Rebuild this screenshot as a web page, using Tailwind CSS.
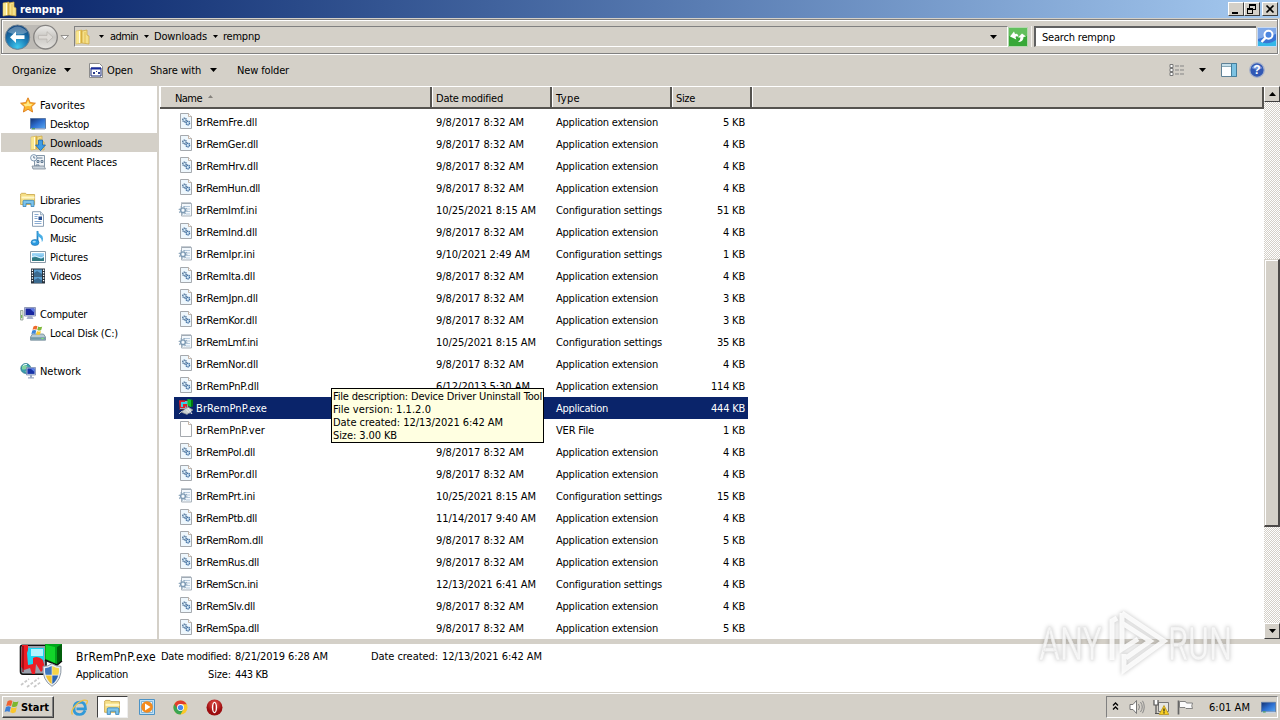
<!DOCTYPE html>
<html lang="en">
<head>
<meta charset="utf-8">
<title>rempnp</title>
<script src="https://cdn.jsdelivr.net/npm/@tailwindcss/browser@4"></script>
</head>
<body class="w-[1280px] h-[720px] overflow-hidden bg-[#d4d0c8] text-black text-[11px] leading-[13px] font-['DejaVu_Sans_Condensed','DejaVu_Sans','Noto_Sans',sans-serif] whitespace-nowrap">
<svg class="absolute w-0 h-0">
  <defs>
    <linearGradient id="gold" x2="1"><stop stop-color="#fdf3a8"/><stop offset=".5" stop-color="#f7dc72"/><stop offset="1" stop-color="#d9ac35"/></linearGradient>
    <linearGradient id="scr" x2="1" y2="1"><stop stop-color="#14306e"/><stop offset=".5" stop-color="#2d6ed0"/><stop offset="1" stop-color="#5aa8f0"/></linearGradient>
    <linearGradient id="sky" x2="0" y2="1"><stop stop-color="#a9dcfa"/><stop offset="1" stop-color="#3d9ad8"/></linearGradient>
    <radialGradient id="back" cx=".5" cy=".9" r=".9"><stop stop-color="#3fc8ee"/><stop offset=".45" stop-color="#1d7fb8"/><stop offset="1" stop-color="#0f3f78"/></radialGradient>
    <linearGradient id="fwd" x2="0" y2="1"><stop stop-color="#eeedea"/><stop offset=".5" stop-color="#c9c7c3"/><stop offset="1" stop-color="#e6e4e0"/></linearGradient>
    <radialGradient id="red" cy=".3"><stop stop-color="#ee5a50"/><stop offset="1" stop-color="#9c0d10"/></radialGradient>
  </defs>
  <symbol id="folder" viewBox="0 0 16 16"><path d="M1 2l6-1v13l-6 1z" fill="url(#gold)" stroke="#d8b64e" stroke-width=".6"/><path d="M7 2l5-1v5l2 1v8l-7-1z" fill="#f5e08a" stroke="#cda53a" stroke-width=".7"/><path d="M4.500 2v12" stroke="#fffbe0" stroke-width="1.400"/><path d="M10 3v11" stroke="#e2bd50" stroke-width="1"/></symbol>
  <symbol id="star" viewBox="0 0 16 16"><path d="M8 .8l2.200 4.800 5.200.6-3.900 3.500 1.100 5.300L8 12.300 3.400 15l1.100-5.300L.6 6.200l5.200-.6z" fill="#fcb72c" stroke="#dc7a18" stroke-width=".9"/><path d="M8 3.500l1.400 3.200 3.200.5-2.400 2L8 9 5.400 9.600 3.400 7.200l3.200-.5z" fill="#ffe98a"/></symbol>
  <symbol id="desktop" viewBox="0 0 16 16"><path d="M.5 2.500h15v10H.5z" fill="url(#scr)" stroke="#5b7aa8"/><path d="M1 12.500h14v1.500H1z" fill="#c6d3e6"/><path d="M2 12.800h3" stroke="#3a9a3a"/></symbol>
  <symbol id="downloads" viewBox="0 0 16 16"><use href="#folder"/><path d="M8.500 5h4v5h3l-5 5.700-5-5.700h3z" fill="#3f9de4" stroke="#1e66ad" stroke-width=".8"/></symbol>
  <symbol id="recent" viewBox="0 0 16 16"><path d="M4.500 1.500h10v11h-10z" fill="#eef2f6" stroke="#8597a8"/><path d="M6.500 4h6M7 6.500h2v2H7zm4 0h2v2h-2zM6 11h3v2H6z" stroke="#647b92" fill="#cfe0ee"/><path d="M2 12h12l1.500 3H3z" fill="#c9d3dc" stroke="#7d8b98" stroke-width=".8"/><circle cx="3.800" cy="3.800" r="3.200" fill="#f4f8fc" stroke="#7f98b0"/><path d="M3.800 2v2h1.500" stroke="#445f7c" fill="none" stroke-width=".8"/></symbol>
  <symbol id="libraries" viewBox="0 0 16 16"><path d="M.6 3.500V2l1-.7h4l1 1.200h8v10H.6z" fill="#f6df86" stroke="#c7a345" stroke-width=".8"/><path d="M1.500 4.500h13v2h-13z" fill="#fff7c8"/><path d="M3 14.500V9.500q0-1.200 1.200-1.200h8.600q1.200 0 1.200 1.200v5h-3v-3H6v3z" fill="#7cc4ec" stroke="#3a83b8" stroke-width=".8"/></symbol>
  <symbol id="documents" viewBox="0 0 16 16"><path d="M2.500.7h8l3 3v11.600h-11z" fill="#fff" stroke="#7d93aa" stroke-width=".9"/><path d="M4.500 3.500h4M4.500 5.500h3M4.500 7.500h3M4.500 10.500h7M4.500 12.500h7" stroke="#7aa0cc" stroke-width=".9"/><path d="M8.500 5.500h3.500v3.500H8.500z" fill="#274f91"/><path d="M10.500.8v3h3" fill="#dce8f2" stroke="#7d93aa" stroke-width=".7"/></symbol>
  <symbol id="music" viewBox="0 0 16 16"><path d="M7.500 1v11" stroke="#2387c8" stroke-width="1.800"/><ellipse cx="5" cy="12.500" rx="4" ry="3" fill="#2a9ae0" stroke="#1b6fae" stroke-width=".6"/><path d="M7.500.5q.5 3 3 4t2.500 4-1.200 3.500q.4-4-4.300-6z" fill="#48aee6"/><ellipse cx="4.200" cy="11.800" rx="1.700" ry="1" fill="#a5dcfa"/></symbol>
  <symbol id="pictures" viewBox="0 0 16 16"><path d="M.5 2.500h15v11H.5z" fill="#fff" stroke="#8a9aa8"/><path d="M2 4h12v8H2z" fill="url(#sky)"/><path d="M2 9q4-2 7 0t5-1v4H2z" fill="#317a82"/><path d="M2 7.500q3-1.500 6 .5t6-.5" stroke="#dff3fd" fill="none"/></symbol>
  <symbol id="videos" viewBox="0 0 16 16"><path d="M1 .5h14v15H1z" fill="#26313c"/><path d="M4 1.500h8v6H4zM4 8.500h8v6H4z" fill="#5b9fd2"/><path d="M4 5l3-2 5 3v1.500H4zM4 12l4-2 4 2.500v2H4z" fill="#3a6a90"/><path d="M2.400 1.500v13M13.600 1.500v13" stroke="#fff" stroke-width="1.300" stroke-dasharray="1.400 1.200"/></symbol>
  <symbol id="computer" viewBox="0 0 16 16"><path d="M.5 4.500h2.500v9.500H.5z" fill="#dbe5d6" stroke="#8b9a90" stroke-width=".8"/><path d="M1.700 9v3" stroke="#5fae3e"/><path d="M4.500 1.500h11v8.500h-11z" fill="#cdd4ea" stroke="#7a84a8" stroke-width=".8"/><path d="M5.600 2.500h8.800v6.500H5.600z" fill="#1826a0"/><path d="M10 2.500h4.400v4q-2-1-4.400-4z" fill="#5b78e0"/><path d="M8 10h4l1.500 3h-7z" fill="#a5aeca"/></symbol>
  <symbol id="disk" viewBox="0 0 16 16"><path d="M2.500 9h11l2 3v3.200H.5V12z" fill="#b7cad4" stroke="#6f8896" stroke-width=".8"/><path d="M1 12.200h14v2.500H1z" fill="#739aa8"/><path d="M11.500 13.500h2" stroke="#7cf36a"/><path d="M3.500 1.500q2-1.500 4-.3L6.500 4.800q-2-1-4 0z" fill="#ee6a2c"/><path d="M8.200 1.500q2 1 4 0l-1 3.600q-2 1-4 0z" fill="#80b93a"/><path d="M2.300 5.500q2-1 4 0l-1 3.500q-2-1-4 .2z" fill="#3c86d8"/><path d="M7 5.900q2 1 4 0L10 9.500q-2 .8-4-.2z" fill="#f8c92e"/></symbol>
  <symbol id="network" viewBox="0 0 16 16"><circle cx="5.800" cy="5.500" r="5" fill="#3c9cae" stroke="#257084" stroke-width=".7"/><path d="M2 3q3-2 5 0t-1 3-4 0zM5 8h4l-2 2z" fill="#83d3a0"/><path d="M3 2.500q2-1.500 4-1" stroke="#dffaff" fill="none"/><path d="M6.500 4.500h9v7.500h-9z" fill="#d2dcee" stroke="#6b7ca8" stroke-width=".7"/><path d="M7.400 5.400h7.200v5.500H7.400z" fill="#1733a8"/><path d="M10.500 5.400h4.100v3.500z" fill="#5b83e8"/><path d="M10 12h2v2.200h2v1.300H8v-1.300h2z" fill="#9aa9c4"/></symbol>
  <symbol id="dll" viewBox="0 0 16 16"><path d="M2.500.5h8l3 3v12h-11z" fill="#eef7fd" stroke="#a5a9ae"/><path d="M10.500.5v3h3" fill="#fff" stroke="#b9a592" stroke-width=".8"/><circle cx="6.500" cy="7" r="1.800" fill="#cfe6f6" stroke="#53759a" stroke-width="1.400" stroke-dasharray="1.200 .5"/><circle cx="9.800" cy="10" r="1.800" fill="#cfe6f6" stroke="#3f6da0" stroke-width="1.400" stroke-dasharray="1.200 .5"/></symbol>
  <symbol id="ini" viewBox="0 0 16 16"><path d="M3.500 2.500h10v12.500h-10z" fill="#f3f8fc" stroke="#a9b2bb"/><path d="M3.500 1.700h10" stroke="#8d98a5" stroke-width="1.400" stroke-dasharray="1 1"/><path d="M6 5.500h6M9 8h3M9 10.500h3M8 13h4" stroke="#b5c9dc"/><circle cx="5" cy="9.300" r="2.400" fill="#dceaf4" stroke="#7f9ab3" stroke-width="1.400"/><circle cx="5" cy="9.300" r="3.800" fill="none" stroke="#8ba4ba" stroke-width="1.200" stroke-dasharray="1.400 1.580"/><circle cx="5" cy="9.300" r="1" fill="#fff"/></symbol>
  <symbol id="ver" viewBox="0 0 16 16"><path d="M2.500.5h8l3 3v12h-11z" fill="#fefefe" stroke="#a5a9ae"/><path d="M10.500.5v3h3" fill="#fff" stroke="#b9a592" stroke-width=".8"/></symbol>
  <symbol id="exebig" viewBox="0 0 44 44"><path d="M1.500 7V3q0-1.800 2-1.800H27v29H4q-2.500 0-2.500-3z" fill="#9aa0ac" stroke="#111" stroke-width="1.600"/><path d="M6 4h19v17H6z" fill="#19d6f2"/><path d="M12 5h12v7H12z" fill="#b0f4ff"/><path d="M3 1h6v5l-1 3 1 12 5-1v-6q5-3 10 2l2 8-4 4-3-5-2-3-1 10h-3l-2-6-6 2-3-3z" fill="#ee1c24"/><path d="M4 2v26" stroke="#7c0710" stroke-width="1.200"/><path d="M26 0h17v17l-5 4-12-5z" fill="#00a51b"/><path d="M38 3v18l5-4V0z" fill="#015f0b"/><path d="M26 16l12 5 5-4" fill="none" stroke="#111" stroke-width="1.600"/><path d="M27 1v14l9 4V3z" fill="#12d62a"/><path d="M2 41l8-6M8 43l12-9M15 43l7-5" stroke="#c9c9c9" stroke-width="1.700" stroke-dasharray="3 1.500"/></symbol>
  <symbol id="exe" viewBox="0 0 16 16"><path d="M1.500 1.500h9v9h-9z" fill="#9aa5b5" stroke="#5a2840"/><path d="M3 3h6v5H3z" fill="#36d2e4"/><path d="M1 1.500h6v1.500H3v5h2V5h4v4L7 7v2H2z" fill="#e2202c"/><path d="M9.500 0L15 1v6l-3 1-2.500-2z" fill="#10c22c"/><path d="M13 1v7l2-1V1z" fill="#037312"/><path d="M3 13l7-5 5 3-6 4.500z" fill="#c9d0d0" stroke="#8b9196" stroke-width=".7"/><path d="M10 9l4 6M8 10.500l4 4" stroke="#eef2f2"/><path d="M1 15l3-3" stroke="#b9bcc0"/></symbol>
  <symbol id="shield" viewBox="0 0 20 24"><path d="M10 .8q4.500 3 9 2.500 1 14-9 20Q0 17.300 1 3.300 5.500 3.800 10 .8z" fill="#e9eef3" stroke="#8d98a4"/><path d="M9.700 3Q6.500 5 3 5.200q-.2 3.500.6 6.600h6.100z" fill="#3f78bf"/><path d="M10.300 3q3.200 2 6.700 2.200.2 3.500-.6 6.600h-6.100z" fill="#f6d447"/><path d="M9.700 12.400H3.800Q5.500 18 9.700 21z" fill="#f2c22e"/><path d="M10.300 12.400h5.900q-1.700 5.600-5.900 8.600z" fill="#2c64ae"/></symbol>
  <symbol id="win" viewBox="0 0 18 18"><path d="M4 2.500q3-2 5.500-.3L8 8Q5.500 6.500 2.500 8z" fill="#ef6130"/><path d="M10.300 2.800q3 1.500 6-.3L14.700 8q-3 2-6 .3z" fill="#7db72e"/><path d="M2.200 9q3-1.500 5.500 0l-1.500 5.500q-2.500-1.500-5.500 0z" fill="#3b7fd6"/><path d="M8.400 9.300q3 1.800 6 0L13 15q-3 1.800-6 0z" fill="#fac62c"/></symbol>
  <symbol id="down" viewBox="0 0 7 4"><path d="M0 0h7L3.500 4z" fill="currentColor"/></symbol>
</svg>

<!-- title bar -->
<header class="h-[18px] flex items-center pl-[2px] pr-[2px] bg-linear-to-r from-[#0a246a] to-[#a6caf0]">
  <svg class="w-4 h-4"><use href="#folder"/></svg>
  <span class="ml-[2px] font-bold text-white" data-w="43">rempnp</span>
  <div class="ml-auto flex h-[14px]">
    <div class="w-4 h-[14px] bg-[#d4d0c8] border border-t-white border-l-white border-r-[#404040] border-b-[#404040]"><svg viewBox="0 0 14 12" class="block w-[14px] h-3"><path d="M3 9h6v2H3z"/></svg></div>
    <div class="w-4 h-[14px] bg-[#d4d0c8] border border-t-white border-l-white border-r-[#404040] border-b-[#404040]"><svg viewBox="0 0 14 12" class="block w-[14px] h-3" shape-rendering="crispEdges"><path d="M4 1h7v2H4zM4 1h1v4H4zM10 1h1v6h-1zM8 6h3v1H8zM2 5h6v2H2zM2 5h1v6H2zM7 5h1v6H7zM2 10h6v1H2z"/></svg></div>
    <div class="ml-[2px] w-4 h-[14px] bg-[#d4d0c8] border border-t-white border-l-white border-r-[#404040] border-b-[#404040]"><svg viewBox="0 0 14 12" class="block w-[14px] h-3"><path d="M3.500 2.500l7 7M10.500 2.500l-7 7" stroke="#000" stroke-width="1.700"/></svg></div>
  </div>
</header>

<!-- address bar -->
<div class="h-[36px] pt-px">
  <div class="h-[35px] ml-px mr-[2px] border border-[#808080] flex items-center shadow-[inset_1px_1px_0_#fff,0_1px_0_#fff,1px_0_0_#fff]">
    <svg class="w-[72px] h-[33px] shrink-0" viewBox="2 20 72 33"><path d="M17 25h28q-8 12 0 24H17z" fill="#bdbab5"/><circle cx="17.500" cy="37.200" r="12.200" fill="url(#back)" stroke="#6e8292"/><path d="M7.500 32q10-11 20 0-8 5-20 0z" fill="#fff" opacity=".3"/><path d="M10 37.200l6-5.700v3.800h8.500v3.800H16v3.800z" fill="#fff"/><circle cx="45.500" cy="37.200" r="11.800" fill="url(#fwd)" stroke="#858381" stroke-width="1.300"/><path d="M53 37.200l-6-5.500v3.700h-8.500v3.600H47v3.700z" fill="#dddad6" stroke="#b4b1ac" stroke-width=".7"/><path d="M61 35.500h7.500L64.700 39.500z" fill="#fff" stroke="#7d7b78" stroke-width=".8"/></svg>
    <div class="flex-1 h-[21px] border-t border-l border-[#808080] border-b border-b-white border-r border-r-white flex items-center">
      <svg class="w-4 h-4"><use href="#folder"/></svg>
      <svg class="w-[5px] h-[3px] ml-2"><use href="#down"/></svg>
      <span class="ml-[6px]" data-w="28">admin</span>
      <svg class="w-[5px] h-[3px] ml-[6px]"><use href="#down"/></svg>
      <span class="ml-[5px]" data-w="53">Downloads</span>
      <svg class="w-[5px] h-[3px] ml-[6px]"><use href="#down"/></svg>
      <span class="ml-[5px]" data-w="37">rempnp</span>
      <svg class="w-[7px] h-1 ml-auto mr-[10px]"><use href="#down"/></svg>
    </div>
    <svg class="w-[20px] h-[20px] shrink-0" viewBox="0 0 20 20"><path d="M.5.5h19v19H.5z" fill="#38a838" stroke="#b5d9b0"/><path d="M1 1h18v8H1z" fill="#7fcf76" opacity=".6"/><path d="M2 9.500L6 4.500l1 2.500q3-1 3.500 3-2-1.500-3 0l.8 2.500z" fill="#fff"/><path d="M18 9.500l-4-3-4 4h2.500q0 3-2.500 4.500 5.500 0 5.500-5z" fill="#fff"/></svg>
    <div class="w-px h-[21px] ml-[3px] bg-[#f4f2ee] shrink-0"></div>
    <div class="ml-[2px] w-[222px] h-[21px] bg-white border-t-2 border-l-2 border-t-[#606060] border-l-[#606060] border-b border-b-[#d4d0c8] flex items-center shrink-0 pl-[6px]"><span data-w="73">Search rempnp</span></div>
    <svg class="ml-px w-[20px] h-[20px] shrink-0" viewBox="0 0 20 20"><path d="M.5.5h19v19H.5z" fill="#3a74d4" stroke="#c8daf2"/><path d="M1 1h18v6L1 12z" fill="#7fa8e8"/><path d="M1 19v-5q10 5 18-1v6z" fill="#35b7e8"/><circle cx="11.500" cy="7.800" r="4" fill="#4b86e0" stroke="#fff" stroke-width="2"/><path d="M8.500 10.800L4.500 15" stroke="#fff" stroke-width="2.500"/></svg>
  </div>
</div>

<!-- command bar -->
<div class="h-[32px] flex items-center pl-3 pr-[15px]">
  <span data-w="44">Organize</span><svg class="w-[7px] h-1 ml-2"><use href="#down"/></svg>
  <svg class="w-[14px] h-[15px] ml-[18px]" viewBox="0 0 14 15"><path d="M.5.500h10l3 3v11H.5z" fill="#fff" stroke="#8c8c8c"/><path d="M2 5h10v8H2z" fill="#fff" stroke="#182a78"/><path d="M2 4.500h10v2H2z" fill="#182a9c"/><path d="M4 9h2v2H4zM7 8h1v1H7zM9 9h2v2H9z" fill="#2a3c8c"/></svg>
  <span class="ml-[4px]" data-w="26">Open</span>
  <span class="ml-[17px]" data-w="51">Share with</span><svg class="w-[7px] h-1 ml-[9px]"><use href="#down"/></svg>
  <span class="ml-[20px]" data-w="52">New folder</span>
  <svg class="w-[16px] h-[12px] ml-auto" viewBox="0 0 16 12" fill="none"><path d="M1 .5h3v3H1zM1 4.500h3v3H1zM1 8.500h3v3H1z" fill="#fff" stroke="#777"/><path d="M6 2h4M11 2h4M6 6h4M11 6h4M6 10h4M11 10h4" stroke="#858585"/></svg>
  <svg class="w-[7px] h-1 ml-[14px]"><use href="#down"/></svg>
  <svg class="w-[16px] h-[14px] ml-[15px]" viewBox="0 0 16 14"><path d="M.5.5h15v13H.5z" fill="#fdfeff" stroke="#5e8196"/><path d="M1 1h9v3H1z" fill="#c5dfea"/><path d="M10.500.5h5v13h-5z" fill="#7cc2e2" stroke="#447e9c"/><path d="M1 3.500h9" stroke="#88a9b8"/></svg>
  <svg class="w-[16px] h-[16px] ml-[12px]" viewBox="0 0 16 16"><circle cx="8" cy="8" r="7.300" fill="#3158b4" stroke="#a8b2ca" stroke-width="1.300"/><path d="M2.500 6q5-7 11 0-5 3-11 0z" fill="#88a5e4" opacity=".8"/><text x="8" y="12.300" text-anchor="middle" font-size="12" font-weight="bold" fill="#fff" font-family="Liberation Sans">?</text></svg>
</div>

<!-- content -->
<main class="h-[553px] flex">
  <nav id="nav" class="w-[157px] pt-[9px] bg-white"></nav>
  <div class="w-[3px] bg-[#d4d0c8] border-r border-white"></div>
  <section class="w-[1104px] bg-white">
    <div class="h-[23px] border-t border-t-white border-b-2 border-b-[#55534f] bg-[#d4d0c8] flex items-stretch">
      <div class="w-[272px] pl-[14px] pt-[2px] flex items-center border-l border-l-white border-r-2 border-r-[#55534f]"><span data-w="27">Name</span><svg class="w-[5px] h-[3px] ml-[6px] mb-1 rotate-180 text-[#85827c]"><use href="#down"/></svg></div>
      <div class="w-[120px] pl-[3px] pt-[2px] flex items-center border-l border-l-white border-r-2 border-r-[#55534f]"><span data-w="67">Date modified</span></div>
      <div class="w-[120px] pl-[3px] pt-[2px] flex items-center border-l border-l-white border-r-2 border-r-[#55534f]"><span data-w="24">Type</span></div>
      <div class="w-[80px] pl-[3px] pt-[2px] flex items-center border-l border-l-white border-r-2 border-r-[#55534f]"><span data-w="19">Size</span></div>
      <div class="flex-1 border-l border-l-white border-r-2 border-r-[#55534f]"></div>
    </div>
    <div id="files" class="pt-[2px] pl-[14px]"></div>
  </section>
  <aside class="w-4 flex flex-col bg-[conic-gradient(#d4d0c8_25%,#fff_0_50%,#d4d0c8_0_75%,#fff_0)] bg-size-[2px_2px]">
    <div class="h-4 bg-[#d4d0c8] border border-t-white border-l-white border-r-[#404040] border-b-[#404040] flex items-center justify-center"><svg class="w-[7px] h-1 rotate-180"><use href="#down"/></svg></div>
    <div class="mt-[157px] h-[268px] bg-[#d4d0c8] border border-t-[#d4d0c8] border-l-[#d4d0c8] border-r-2 border-r-[#4c4a48] border-b-2 border-b-[#4c4a48] shadow-[inset_1px_1px_0_#fff]"></div>
    <div class="mt-auto h-4 bg-[#d4d0c8] border border-t-white border-l-white border-r-[#404040] border-b-[#404040] flex items-center justify-center"><svg class="w-[7px] h-1"><use href="#down"/></svg></div>
  </aside>
</main>

<!-- details pane -->
<div class="h-[53px] border-t-[5px] border-[#d4d0c8] bg-white flex pl-[19px] leading-[18px]">
  <div class="relative w-[57px] h-[44px]">
    <svg class="w-[44px] h-[44px]"><use href="#exebig"/></svg>
    <svg class="absolute left-[23px] top-[19px] w-[20px] h-[24px]"><use href="#shield"/></svg>
  </div>
  <div class="pt-[4px] w-[84px]"><div class="text-[12px]"><span data-w="80">BrRemPnP.exe</span></div><div><span data-w="52">Application</span></div></div>
  <div class="pt-[4px] w-[72px] text-right pr-px"><div><span data-w="70">Date modified:</span></div><div><span data-w="23">Size:</span></div></div>
  <div class="pt-[4px] w-[139px] pl-[3px]"><div><span data-w="93">8/21/2019 6:28 AM</span></div><div><span data-w="33">443 KB</span></div></div>
  <div class="pt-[4px]"><span data-w="67">Date created:</span><span class="ml-1" data-w="100">12/13/2021 6:42 AM</span></div>
</div>

<!-- taskbar -->
<footer class="h-[28px] border-t border-[#d4d0c8] shadow-[inset_0_1px_0_#fff] bg-[#d4d0c8] flex items-center pt-px">
  <div class="ml-[2px] w-[52px] h-[22px] border border-t-white border-l-white border-r-[#404040] border-b-[#404040] shadow-[inset_-1px_-1px_0_#808080] flex items-center pl-px"><svg class="w-[16px] h-[16px]"><use href="#win"/></svg><span class="font-bold ml-px" data-w="28">Start</span></div>
  <svg class="ml-[17px] w-[17px] h-[17px]" viewBox="0 0 17 17"><path d="M14 11.500q-1.500 4-5.500 4Q3 15.500 3 9.500T9 3.200q5.500 0 5.500 6.600H5.500" fill="none" stroke="#3199d8" stroke-width="2.700"/><path d="M1.500 15.500Q-1 12 5 6t11-4.500q1 1-.8 4" fill="none" stroke="#efc144" stroke-width="1.300"/></svg>
  <div class="ml-[9px] w-[31px] h-[22px] bg-white border border-t-[#404040] border-l-[#404040] border-r-[#eee] border-b-[#eee] flex items-center justify-center"><svg class="w-[17px] h-[17px]"><use href="#libraries"/></svg></div>
  <svg class="ml-[11px] w-[16px] h-[16px]" viewBox="0 0 16 16"><path d="M.5.5h15v15H.5z" fill="#bfe0f6" stroke="#4c93c6"/><path d="M2.500 2.500h11v11h-11z" fill="#e8f4fb" stroke="#7fb4d8"/><circle cx="8" cy="8" r="5.800" fill="#f48a1d"/><path d="M6 4.500v7l5.500-3.500z" fill="#fff"/></svg>
  <svg class="ml-[18px] w-[15px] h-[15px]" viewBox="0 0 16 16"><circle cx="8" cy="8" r="7.500" fill="#fbc829"/><path d="M8 8L1.500 4.200A7.500 7.500 0 0 0 8 15.500L11 10z" fill="#3aa552"/><path d="M8 4.500h6.600H8L4.700 9 1.500 4.200A7.500 7.500 0 0 1 14.600 4.500z" fill="#e03c2e"/><circle cx="8" cy="8" r="3.700" fill="#fff"/><circle cx="8" cy="8" r="2.800" fill="#4587ee"/></svg>
  <svg class="ml-[18px] w-[17px] h-[17px]" viewBox="0 0 17 17"><circle cx="8.500" cy="8.500" r="8" fill="url(#red)"/><ellipse cx="8.500" cy="8.500" rx="2.600" ry="5.700" fill="#fff"/><ellipse cx="8.500" cy="8.500" rx="1.200" ry="4.500" fill="#b01818"/></svg>
  <div class="ml-auto mr-[2px] w-[172px] h-[22px] border border-t-[#808080] border-l-[#808080] border-b-white border-r-white flex items-center pl-[5px]">
    <svg class="w-[7px] h-[8px] mb-[3px]" viewBox="0 0 7 8" fill="none" stroke="#000" stroke-width="1.300"><path d="M1 3.500l2.500-2.500L6 3.500M1 7.500L3.500 5 6 7.500"/></svg>
    <svg class="w-[16px] h-[14px] ml-[10px]" viewBox="0 0 16 14" fill="none"><path d="M1 4.500h3l3.500-4v13L4 9.500H1z" fill="#fff" stroke="#777"/><path d="M9.500 4q2 3 0 6M11.500 2q3.500 5 0 10M13.500.8q3.500 6 0 12.400" stroke="#888"/></svg>
    <svg class="w-[16px] h-[16px] ml-[8px]" viewBox="0 0 16 16"><path d="M5.500 3.500h10v9h-10z" fill="#e6e6e2" stroke="#777"/><path d="M1 1v5h4V1M3 6v9M3 6" fill="#fff" stroke="#555" stroke-width="1.200"/><path d="M2 14.500h4" stroke="#555"/><path d="M11 6.500l4.800 9H6.200z" fill="#f8cf24" stroke="#b08a10" stroke-width=".7"/><path d="M11 9.500v3M11 13.300v1.200" stroke="#222" stroke-width="1.200"/></svg>
    <svg class="w-[16px] h-[15px] ml-[8px]" viewBox="0 0 16 15"><path d="M1.500.5v14" stroke="#666" stroke-width="1.700"/><path d="M2.500 1.500h6l1 1.500h6q-1.500 3 0 5.500H9L8 7.500H2.500z" fill="#fbfbfb" stroke="#777" stroke-width=".9"/></svg>
    <span class="ml-[16px]" data-w="41">6:01 AM</span>
    <svg class="w-[15px] h-[15px] ml-[11px]"><use href="#desktop"/></svg>
  </div>
</footer>

<!-- file tooltip -->
<div class="absolute left-[331px] top-[388px] w-[213px] h-[55px] bg-[#ffffe1] border border-black pt-[1px] pl-px flex flex-col items-start">
  <span data-w="209">File description: Device Driver Uninstall Tool</span>
  <span data-w="98">File version: 1.1.2.0</span>
  <span data-w="170">Date created: 12/13/2021 6:42 AM</span>
  <span data-w="64">Size: 3.00 KB</span>
</div>

<!-- watermark -->
<svg class="absolute left-[1030px] top-[604px] w-[210px] h-[76px] overflow-visible drop-shadow-[0_0_2px_rgba(0,0,0,0.28)]" viewBox="0 0 210 76" fill="none">
  <g font-family="Roboto" font-size="47" fill="#fff" fill-opacity=".75" stroke="#e6e6e6" stroke-width=".6">
    <text x="9" y="56" textLength="63" lengthAdjust="spacingAndGlyphs">ANY</text>
    <text x="138" y="56" textLength="64" lengthAdjust="spacingAndGlyphs">RUN</text>
  </g>
  <path d="M82 56V17l5-3M92 9l42 28-40 29V50M92 9v36l16-10M92 19l28 18-24 17" stroke="#fff" stroke-opacity=".85" stroke-width="5"/>
</svg>

<script>
const nav = [["star","Favorites",45,0],["desktop","Desktop",39,1],["downloads","Downloads",52,1],["recent","Recent Places",67,1],null,
["libraries","Libraries",40,0],["documents","Documents",53,1],["music","Music",26,1],["pictures","Pictures",38,1],["videos","Videos",31,1],null,
["computer","Computer",47,0],["disk","Local Disk (C:)",68,1],null,["network","Network",41,0]];
document.getElementById("nav").innerHTML = nav.map(n => {
  if (!n) return '<div class="h-[19px]"></div>';
  const pad = n[3] ? "pl-[29px]" : "pl-[19px]";
  const bg = n[1] === "Downloads" ? "bg-[#d4d0c8]" : "bg-white";
  return `<div class="h-[19px] ml-px pt-[2px] flex items-center ${pad} ${bg}"><svg class="w-4 h-4 mb-[2px]"><use href="#${n[0]}"/></svg><span class="ml-[4px]" data-w="${n[2]}">${n[1]}</span></div>`;
}).join("");

const S = "9/8/2017 8:32 AM";
const files = [["Fre.dll",61,S,5],["Ger.dll",62,S,4],["Hrv.dll",62,S,4],["Hun.dll",64,S,4],["Imf.ini",61,"10/25/2021 8:15 AM",51],["Ind.dll",61,S,4],["Ipr.ini",59,"9/10/2021 2:49 AM",1],["Ita.dll",59,S,4],["Jpn.dll",62,S,3],["Kor.dll",61,S,3],["Lmf.ini",62,"10/25/2021 8:15 AM",35],["Nor.dll",62,S,4],["PnP.dll",63,"6/12/2013 5:30 AM",114],["PnP.exe",71,"",444],["PnP.ver",69,"",1],["Pol.dll",59,S,4],["Por.dll",61,S,4],["Prt.ini",59,"10/25/2021 8:15 AM",15],["Ptb.dll",61,"11/14/2017 9:40 AM",4],["Rom.dll",67,S,5],["Rus.dll",63,S,4],["Scn.ini",62,"12/13/2021 6:41 AM",4],["Slv.dll",59,S,4],["Spa.dll",63,S,5]];
const types = {dll:["Application extension",102],ini:["Configuration settings",106],exe:["Application",52],ver:["VER File",38]};
document.getElementById("files").innerHTML = files.map(f => {
  const ext = f[0].slice(-3), t = types[ext];
  const bg = ext === "exe" ? "bg-[#0a246a] text-white" : "bg-white";
  const dw = f[2] === S ? 88 : f[2].length === 17 ? 94 : 100;
  const kw = 16 + 6 * String(f[3]).length;
  return `<div class="h-[22px] w-[574px] flex items-center ${bg}"><svg class="w-4 h-4 ml-1 mb-[2px]"><use href="#${ext}"/></svg>
  <span class="w-[242px] pl-[2px]"><span data-w="${f[1]}">BrRem${f[0]}</span></span><span class="w-[120px]"><span data-w="${dw}">${f[2]}</span></span>
  <span class="w-[130px]"><span data-w="${t[1]}">${t[0]}</span></span><span class="flex-1 text-right pr-[3px]"><span data-w="${kw}">${f[3]} KB</span></span></div>`;
}).join("");

// Set tracking so each label occupies its nominal width.
function fit() {
  document.querySelectorAll("[data-w]").forEach(el => {
    if (!el.textContent) return;
    const r = document.createRange();
    r.selectNodeContents(el);
    let s = 0;
    el.style.letterSpacing = "0px";
    for (let i = 0; i < 3; i++) {
      s += (el.dataset.w - r.getBoundingClientRect().width) / el.textContent.length;
      el.style.letterSpacing = s.toFixed(3) + "px";
    }
  });
}
fit();
addEventListener("load", fit);
document.fonts.ready.then(fit);
requestAnimationFrame(() => requestAnimationFrame(fit));
[50, 150, 300].forEach(t => setTimeout(fit, t));
</script>
</body>
</html>
